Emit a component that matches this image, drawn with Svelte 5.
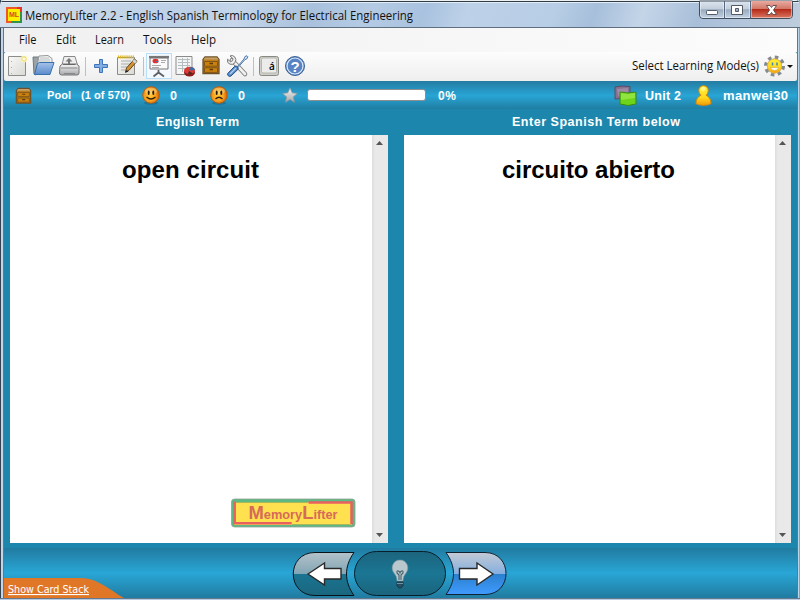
<script>
  const menus = [
    ['File', 19, 17.5], ['Edit', 56, 20], ['Learn', 95, 29], ['Tools', 143, 29], ['Help', 191, 25]
  ];
  const panels = [
    { term: 'open circuit', length: 137, logo: true },
    { term: 'circuito abierto', length: 173, logo: false }
  ];
</script>

{#snippet label(text, width, size, cls = '')}
  <svg class="label {cls}" width={width} height="26" viewBox="0 0 {width} 26">
    <text x="0" y="17" textLength={width} lengthAdjust={cls === 'ui' ? 'spacing' : 'spacingAndGlyphs'} font-size={size}>{text}</text>
  </svg>
{/snippet}

{#snippet drawer()}
  <path d="M3.500 1h12l2 2.500v14H1.500v-14z" fill="#bd7d1c" stroke="#6b502a" stroke-width="1.300" />
  <path d="M3.500 1.600h12l1.600 2H2z" fill="#c7a067" />
  <path d="M3 5.500h13v4.700H3zM3 11.700h13v4.700H3z" fill="#c9800c" stroke="#7a5116" stroke-width=".9" />
  <path d="M8 7.500h3.500M8 13.500h3.500" stroke="#5e3c10" stroke-width="1.300" />
{/snippet}

{#snippet face(sad)}
  <svg width="18" height="19" viewBox="0 0 18 19">
    <ellipse cx="9" cy="17" rx="7" ry="1.8" fill="#17678b" opacity=".6" />
    <circle cx="9" cy="9" r="8.3" fill="url(#orange)" stroke="#b85b08" stroke-width=".9" />
    <ellipse cx="9" cy="5" rx="6" ry="3.6" fill="#fff3a0" opacity=".45" />
    <ellipse cx="6.7" cy="6.8" rx="1" ry="2.200" fill="#241808" />
    <ellipse cx="11.3" cy="6.8" rx="1" ry="2.200" fill="#241808" />
    <path d={sad ? 'M5.500 13q3.500-3.500 7 0' : 'M4.500 11q4.500 4 9 0'} fill="none" stroke="#382008" stroke-width="1.200" />
  </svg>
{/snippet}

<div class="window">
  <svg class="defs" width="0" height="0">
    <defs>
      <radialGradient id="orange" cx=".45" cy=".55"><stop stop-color="#ffc93a" /><stop offset=".65" stop-color="#f8a01e" /><stop offset="1" stop-color="#df6b08" /></radialGradient>
      <linearGradient id="paper" x2="1" y2="1"><stop stop-color="#f8f8f6" /><stop offset="1" stop-color="#d9d9d6" /></linearGradient>
      <linearGradient id="blue" x2="0" y2="1"><stop stop-color="#a4c2e8" /><stop offset="1" stop-color="#5b8aca" /></linearGradient>
      <linearGradient id="metal" x2="0" y2="1"><stop stop-color="#f7f7f7" /><stop offset="1" stop-color="#a4a6a8" /></linearGradient>
      <linearGradient id="gold" x2="0" y2="1"><stop stop-color="#fff33a" /><stop offset=".6" stop-color="#ffd91d" /><stop offset="1" stop-color="#f29c09" /></linearGradient>
      <linearGradient id="glass" x2="0" y2="1"><stop stop-color="#b3c2ca" /><stop offset=".5" stop-color="#82a5b4" /><stop offset=".51" stop-color="#1a7491" /><stop offset="1" stop-color="#1b667e" /></linearGradient>
      <linearGradient id="glassBlue" x2="0" y2="1"><stop stop-color="#c3cad4" /><stop offset=".51" stop-color="#84aee0" /><stop offset=".52" stop-color="#2b80cf" /><stop offset="1" stop-color="#409bff" /></linearGradient>
      <linearGradient id="center" x2="0" y2="1"><stop stop-color="#1c647d" /><stop offset=".5" stop-color="#1a7694" /><stop offset="1" stop-color="#1b647c" /></linearGradient>
    </defs>
  </svg>

  <header>
    <svg class="app-icon" width="16" height="16" viewBox="0 0 16 16">
      <path d="M0 0h16v16H0z" fill="#e3322e" /><path d="M0 5V0h11v2H2v12h3v2H0z" fill="#ed5a27" /><path d="M5 16h11V5h-2v9H5z" fill="#31934b" />
      <path d="M2 2h12v12H2z" fill="#fff000" /><text x="3" y="9.5" font-size="7" font-weight="bold" fill="#dc4526" textLength="10">ML</text>
    </svg>
    {@render label('MemoryLifter 2.2 - English Spanish Terminology for Electrical Engineering', 388, 12, 'dark')}
    <div class="behind"></div>
    <svg class="controls" width="94" height="20" viewBox="699 0 94 20">
      <defs>
        <linearGradient id="ctrl" x2="0" y2="1"><stop stop-color="#dce5ef" /><stop offset=".45" stop-color="#c3cedc" /><stop offset=".5" stop-color="#9aabc0" /><stop offset="1" stop-color="#c4d4e5" /></linearGradient>
        <linearGradient id="close" x2="0" y2="1"><stop stop-color="#e9aaa0" /><stop offset=".45" stop-color="#d27869" /><stop offset=".5" stop-color="#b52b19" /><stop offset="1" stop-color="#da7660" /></linearGradient>
      </defs>
      <path d="M699.5 1v14q0 3.500 3.500 3.500h86q3.500 0 3.500-3.500V1z" fill="url(#ctrl)" stroke="#414e60" />
      <path d="M750.500 1H792v14q0 3-3 3H750.500z" fill="url(#close)" />
      <path d="M724.500 1v17.500M750.500 1v17.500" stroke="#56667c" />
      <path d="M700.500 2v13q0 2.500 2.500 2.500h20.500V2.500M725.500 2v15.500h24V2M751.500 2v15.500H789q2.500 0 2.500-2.500V2" fill="none" stroke="#fff" opacity=".45" />
      <rect x="706.500" y="10.500" width="11" height="4" rx=".8" fill="#fff" stroke="#535b69" />
      <path d="M731.500 5.500h11v9h-11zM735.500 8.500h3v3h-3z" fill="#fff" fill-rule="evenodd" stroke="#535b69" />
      <path d="M766.500 5.500h3.500l1.500 2 1.500-2h3.500l-3 4.500 3 4.500H773l-1.500-2-1.500 2h-3.500l3-4.500z" fill="#fff" stroke="#5f4444" stroke-width=".9" />
    </svg>
  </header>

  <nav>
    {#each menus as [text, x, width], i}
      <span style:margin-left="{i ? x - menus[i - 1][1] - menus[i - 1][2] : x - 4}px">{@render label(text, width, 12, 'dark')}</span>
    {/each}
  </nav>

  <div class="toolbar">
    <svg width="306" height="29" viewBox="4 52 306 29">
      <path d="M8.500 56.500h17v19h-17z" fill="url(#paper)" stroke="#8c8c89" /><path d="M11.500 61v1m0 5v1m0 5v1" stroke="#aaa" />
      <circle cx="24" cy="59" r="3.500" fill="#fff8ba" opacity=".9" /><circle cx="24" cy="59" r="2.200" fill="#fffce3" stroke="#e6d767" />
      <path d="M33 57h8l1 2h9v7H37l-1 9-2-1z" fill="#9aa2a7" stroke="#6c7880" /><path d="m39 56 9-.5 4 3v8H37z" fill="#f0f1f0" stroke="#959999" /><path d="M40 58h9M39 60h11M39 62h11" stroke="#bdc0c2" />
      <path d="m37.500 63.500 2-1H54l-4 12H34.500z" fill="url(#blue)" stroke="#3970ae" />
      <path d="m62 65 2-8.500h11L77.500 65z" fill="#eee" stroke="#898989" /><path d="m69 58 3.500 3.500H70V65h-2v-3.500h-2.500z" fill="#777" />
      <path d="m60 66 2.500-2h14l2.500 2v7q0 2-2 2H61.500q-2 0-2-2z" fill="url(#metal)" stroke="#777" /><path d="M61 68h16.500M64 73.500h11" stroke="#888" /><path d="M63 64.500h12.500" stroke="#666" />
      <path d="M85.500 57v19M143.500 57v19M253.500 57v19" stroke="#bfc0c1" />
      <path d="M99.500 59.500h3v5h5v3h-5v5h-3v-5h-5v-3h5z" fill="#83ace3" stroke="#3d73bb" />
      <path d="M117.500 57.500h17v17h-17z" fill="url(#paper)" stroke="#8d8b85" /><path d="M118 57h16" stroke="#ddb521" stroke-width="3" stroke-dasharray="1.300 .8" /><path d="M121 61h10M121 64h9M121 67h8M121 70h5" stroke="#acacaa" />
      <path d="m125.500 72 1-4 8-9 2.500 2.300-8 9z" fill="#d39232" stroke="#674219" /><path d="m125 73 1.500-3 2 1.500z" fill="#222" /><path d="m132.500 61.200 2.500 2.200 1.800-2-2.500-2.200z" fill="#c8dbe2" />
      <rect x="146.500" y="53.500" width="25" height="25" fill="#f3f9fe" stroke="#b6dffa" />
      <path d="M150 58h18v11h-18z" fill="#fafafa" stroke="#777" /><path d="M149 57h20" stroke="#777" stroke-width="2.200" /><path d="M158.500 70v4m-5 2.500 5-4 5.500 4" fill="none" stroke="#5e6264" stroke-width="1.800" />
      <ellipse cx="155.500" cy="61" rx="3" ry="2.300" fill="#df322e" /><path d="M155.500 61h3l-.5 2z" fill="#337abf" /><path d="M161 60.500h5M161 62.500h4M152 65.500h9M152 67.500h7" stroke="#aaa" />
      <path d="M176 56.500h16v18h-16z" fill="#f4f5f5" stroke="#8b8b8b" /><path d="M178 59.500h12M178 62.500h12M178 65.500h12M178 68.500h8M182.500 58v14M187.500 58v9" stroke="#b6bdc0" />
      <ellipse cx="189.500" cy="72.500" rx="5.500" ry="4" fill="#8f1917" /><ellipse cx="189.500" cy="70.500" rx="5.500" ry="3.700" fill="#d93b35" /><path d="m189.500 70.500 1-3.800q4 .6 4.500 3.300z" fill="#3c6da4" /><path d="m189 71 4 2.500q-3 1.500-5 .5z" fill="#542821" />
      <g transform="translate(201.500 56)">{@render drawer()}</g>
      <path d="m232 60 13 14" stroke="#777" stroke-width="4.500" stroke-linecap="round" /><path d="m232 60 13 14" stroke="#f0f0ed" stroke-width="2.800" stroke-linecap="round" />
      <path d="m230 56 3 2.700-.5 2-2 1-3-2.500q-.7 4 2.500 5 3 1 5-1.500 2-3.500-.5-6-2-2-4.500-.7z" fill="#eee" stroke="#777" />
      <path d="m237 67 7-8 1-2.500 2-.7.800.9-.8 2-2.200 1-7 8z" fill="#ddebfa" stroke="#4d79ad" /><path d="m227.700 73.500 7-7.200q1.700-.7 3 .8l.5 2-7.300 7q-1.500.8-2.700-.4t-.5-2.200z" fill="#578bc9" stroke="#234f88" /><path d="m230 74 6-6" stroke="#b2d0ef" stroke-width="1.200" />
      <rect x="259.500" y="56.500" width="19" height="19" rx="2" fill="#cfcfca" stroke="#8a8a85" /><rect x="261.500" y="58" width="15" height="15" rx="1.500" fill="#ececea" stroke="#b6b6b0" /><text class="accent" x="269" y="70" font-size="10">á</text>
      <circle cx="295" cy="66" r="9.500" fill="#557fc0" stroke="#3f6391" /><circle cx="295" cy="66" r="8" fill="#5884c4" stroke="#dceaff" stroke-width="1.200" /><text x="290.500" y="71.500" font-size="15" font-weight="bold" fill="#fff">?</text>
    </svg>
    <div class="mode">
      {@render label('Select Learning Mode(s)', 127, 12, 'dark')}
      <svg width="31" height="28" viewBox="762 52 31 28">
        <circle cx="774.500" cy="66" r="8.700" fill="none" stroke="#858a8e" stroke-width="3.600" stroke-dasharray="3.500 3.333" />
        <circle cx="774.500" cy="66" r="7.600" fill="#a5a39a" /><circle cx="774.500" cy="66" r="7" fill="url(#gold)" stroke="#efb42a" stroke-width=".8" />
        <path d="M772.500 62.500v3M777 62.500v3" stroke="#4388b8" stroke-width="1.500" /><path d="M770.500 67.500h8q-.5 3-4 3t-4-3" fill="#fff" stroke="#c9912b" stroke-width=".5" />
        <path d="M787 65h6l-3 3z" fill="#111" />
      </svg>
    </div>
  </div>

  <div class="status">
    <svg class="cab" width="17" height="18" viewBox="0 0 19 19">{@render drawer()}</svg>
    <span class="pool">{@render label('Pool', 24, 11, 'ui')}</span>
    <span class="count">{@render label('(1 of 570)', 49, 11, 'ui')}</span>
    <span class="happy">{@render face(false)}</span>
    <span class="known">{@render label('0', 7, 12.5, 'ui')}</span>
    <span class="sad">{@render face(true)}</span>
    <span class="missed">{@render label('0', 7, 12.5, 'ui')}</span>
    <svg class="star" width="16" height="17" viewBox="0 0 16 17"><path d="m8 .8 2.200 5 5.200.6-4 3.500 1.200 5.500L8 12.500l-4.600 2.900 1.200-5.500-4-3.500 5.200-.6z" fill="url(#metal)" stroke="#84929a" stroke-width=".7" /></svg>
    <div class="progress"></div>
    <span class="percent">{@render label('0%', 18, 12, 'ui')}</span>
    <svg class="cards" width="24" height="22" viewBox="0 0 24 22"><path d="m1 2 7-1 8 .5V14l-8-.5-7 .5z" fill="#877193" stroke="#5b4b63" /><path d="m3 4 11-1v6L4 11z" fill="#a696ad" opacity=".7" /><path d="m6 7 8 1 8-1v12l-8 1.500L6 19z" fill="#6ed419" stroke="#398b14" /><path d="m7 8 7 1 7-1v5l-14 2z" fill="#a9ed55" opacity=".6" /></svg>
    <span class="unit">{@render label('Unit 2', 36, 12.5, 'ui')}</span>
    <svg class="person" width="17" height="21" viewBox="0 0 17 21"><path d="M8.500.7q4.600.4 4.700 4.800 0 3-2.200 4.700 5 2.500 5 8.500-3 1.600-7.500 1.600T1 18.700q0-6 5-8.500-2.200-1.700-2.200-4.700Q4 1.100 8.500.7z" fill="url(#gold)" stroke="#d9890b" /><ellipse cx="8" cy="4" rx="2.400" ry="2" fill="#fff" opacity=".45" /></svg>
    <span class="user">{@render label('manwei30', 65, 13, 'ui')}</span>
  </div>

  <div class="headings">
    <span class="heading-left">{@render label('English Term', 83, 12.5, 'ui')}</span>
    <span class="heading-right">{@render label('Enter Spanish Term below', 168, 12.5, 'ui')}</span>
  </div>

  <main>
    {#each panels as panel}
      <section class:right={!panel.logo}>
        <div class="content">
          <svg class="term" width={panel.length} height="36" viewBox="0 0 {panel.length} 36"><text y="25" font-size="24" font-weight="bold" textLength={panel.length}>{panel.term}</text></svg>
          {#if panel.logo}
            <svg class="logo" width="125" height="30" viewBox="231 498 125 30">
              <rect x="231.500" y="499" width="123.500" height="28" rx="3" fill="#5bb981" stroke="#92a297" stroke-width=".8" /><path d="M234 502h118v23H234z" fill="#ffe04f" />
              <path d="M234.700 501.500v21.700h57M308.500 502.500h43v22" fill="none" stroke="#e96060" stroke-width="2.500" /><path d="M236 502.500h72M292 524.500h58" stroke="#a9b65c" />
              <text x="248.500" y="519" textLength="89" lengthAdjust="spacingAndGlyphs" font-weight="bold" font-size="12.500" fill="#d66b58"><tspan font-size="18">M</tspan>emory<tspan font-size="18">L</tspan>ifter</text>
            </svg>
          {/if}
        </div>
        <div class="scroll"><svg width="9" height="5"><path d="M1 5h7L4.500 1z" fill="#555" /></svg><svg width="9" height="5"><path d="M1 0h7L4.500 4z" fill="#555" /></svg></div>
      </section>
    {/each}
  </main>

  <footer>
    <div class="stack">
      <svg class="hill" width="122" height="20" viewBox="0 0 122 20"><path d="M0 0h75c17 0 25 8 34 13q5 4 11 7H0z" fill="#df7727" /></svg>
      <span>{@render label('Show Card Stack', 81, 11, 'plain')}</span>
    </div>
    <svg class="buttons" width="216" height="49" viewBox="292 549 216 49">
      <path d="M354 552.500H315c-29 0-29 43 0 43h39c-10-14-10-29 0-43z" fill="url(#glass)" stroke="#071318" />
      <path d="M446 552.500h39c28 0 28 42 0 42h-39c10-14 10-28 0-42z" fill="url(#glassBlue)" stroke="#102232" />
      <rect x="354.500" y="551.500" width="91" height="44" rx="22" fill="url(#center)" stroke="#061f2a" />
      <path d="m308 574 16.500-11v5.500H341v10.500h-16.500v6z" fill="#fff" stroke="#292929" stroke-width="1.400" />
      <path d="M459.500 568.500h17.500V563l16 11-16 11v-6h-17.500z" fill="#fff" stroke="#292929" stroke-width="1.400" />
      <path d="M397 581q0-5-3-8c-4-5-1-13 6-13s10 8 6 13q-3 3-3 8z" fill="#bac7cc" stroke="#829aa3" stroke-width=".6" />
      <path d="M399 580v-5l-2-2q-.5-2.500 1.500-2 1.500.5 1.500 2.500 0-2 1.500-2.500 2-.5 1.500 2l-2 2v5" fill="none" stroke="#41616e" stroke-width="1.100" />
      <path d="M397 582h6v4l-2 2h-2l-2-2z" fill="#264e60" stroke="#173d4e" /><path d="M397 583.500h6" stroke="#7394a0" />
    </svg>
  </footer>
</div>

<style>
  :global(body) { margin: 0; overflow: hidden; }
  .window { box-sizing: border-box; width: 800px; height: 600px; padding: 0 3px 2px 4px; display: flex; flex-direction: column; position: relative; background: linear-gradient(transparent 598px, #66788c 598px 599px, #b7cce2 599px), linear-gradient(90deg, #354250 0 1px, #c3d5e8 1px 3px, #66758a 3px 4px, #1c86ac 4px 797px, #66758a 797px 798px, #bad5e8 798px 799px, #49bfdd 799px); font-family: "Liberation Sans", Arial, sans-serif; }
  svg { display: block; flex-shrink: 0; }
  text { font-family: "Liberation Sans", Arial, sans-serif; }
  .defs { position: absolute; }
  .label { overflow: visible; fill: white; }
  .dark text { font-family: "Open Sans", "Noto Sans", sans-serif; fill: #111; }
  .ui text { font-family: "Liberation Sans", Arial, sans-serif; font-weight: bold; }
  .plain text { font-family: "DejaVu Sans Condensed", "DejaVu Sans", sans-serif; text-decoration: underline; }
  .accent { font-family: "Open Sans", sans-serif; font-weight: 600; }

  header { height: 28px; flex: none; display: flex; margin: 0 -3px 0 -4px; box-sizing: border-box; border-bottom: 1px solid #5f6f80; background: linear-gradient(180deg, #edf1f2 0 1px, #303c46 1px 2px, #e2edf8 2px 3px, transparent 3px), linear-gradient(110deg, #d5e1ed 0, #c5d6e9 12%, #bdd0e6 25%, #c5d6ea 30%, #a9c1dd 39%, #b5cbe4 46%, #a9c2df 53%, #bdd1e8 58%, #b8cee6 69%, #a7bfdb 74%, #c4d5e8 80%, #a9bfd9 87%, #becddc 100%); border-radius: 5px 5px 0 0; }
  .app-icon { margin: 7px 0 0 6px; }
  header > .label { margin: 3px 0 0 3px; }
  .behind { flex: 1; }
  .controls { margin-right: 7px; }

  nav { height: 24px; flex: none; display: flex; background: linear-gradient(90deg, #f0f0f0, #fcfcfc); }
  nav .label { margin-top: -1px; }
  .toolbar { height: 29px; flex: none; display: flex; justify-content: space-between; background: linear-gradient(#fdfdfd, #eee); border-radius: 2px; }
  .mode { display: flex; padding-right: 4px; }
  .mode .label { margin: 1px 3px 0 0; }

  .status { height: 28px; flex: none; display: flex; align-items: flex-start; background: linear-gradient(#247ca2, #28a5d5 52%, #207da2); }
  .status .label { margin-top: 2px; }
  .status .pool .label, .status .count .label { margin-top: 1px; }
  .cab { margin: 6px 0 0 11px; }
  .pool { margin-left: 15px; }
  .count { margin-left: 10px; }
  .happy { margin: 5px 0 0 12px; }
  .known { margin-left: 10px; }
  .sad { margin: 5px 0 0 33px; }
  .missed { margin-left: 10px; }
  .star { margin: 6px 0 0 37px; }
  .progress { width: 117px; height: 10px; margin: 8px 0 0 9px; border: 1px solid #8e8d90; border-radius: 3px; background: white; }
  .percent { margin-left: 12px; }
  .cards { margin: 4px 0 0 158px; }
  .unit { margin-left: 7px; }
  .person { margin: 4px 0 0 14px; }
  .user { margin-left: 11px; }

  .headings { height: 26px; flex: none; display: flex; }
  .heading-left { margin-left: 152px; }
  .heading-right { margin-left: 273px; }
  main { height: 408px; flex: none; display: flex; gap: 16px; padding: 0 5px 0 6px; }
  section { width: 378px; flex: none; display: flex; background: white; }
  section.right { width: 387px; }
  .content { flex: 1; display: flex; flex-direction: column; justify-content: space-between; }
  .term { margin: 18px 0 0 112px; overflow: visible; }
  .right .term { margin-left: 98px; }
  .logo { margin: 0 0 15px 221px; }
  .scroll { width: 16px; box-sizing: border-box; padding: 5px 4px 5px 3px; display: flex; flex-direction: column; justify-content: space-between; background: linear-gradient(90deg, #ddd, #e9e9e9 3px); }

  footer { flex: 1; display: flex; border-top: 5px solid #1c86ac; background: linear-gradient(#217ba0, #29a6d6 50%, #207ba0) padding-box; }
  .stack { width: 122px; flex: none; align-self: flex-end; display: grid; height: 20px; }
  .stack > * { grid-area: 1 / 1; }
  .stack span { margin: -2px 0 0 4px; height: 22px; }
  .buttons { margin: 1px 0 0 166px; }
</style>
